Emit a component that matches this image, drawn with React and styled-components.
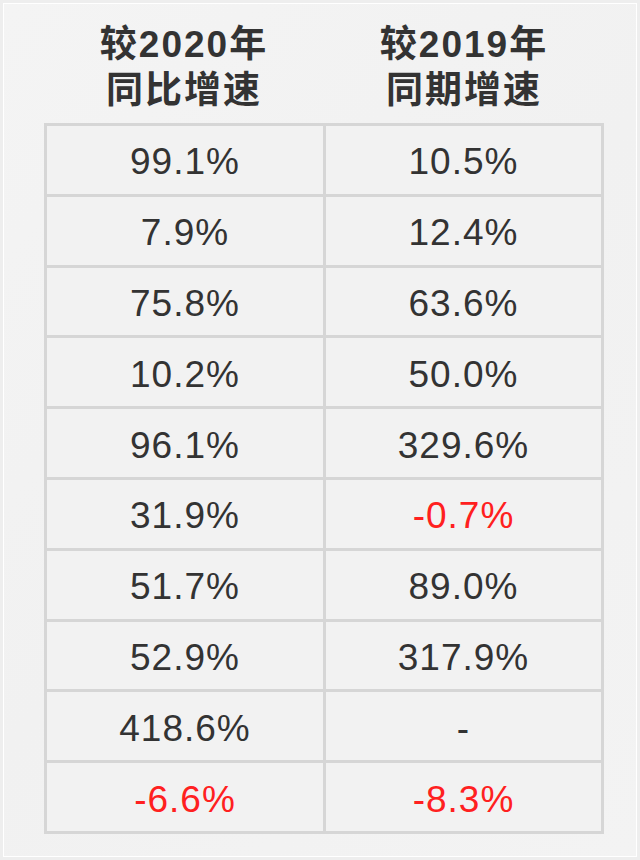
import React from "react";
import styled, { createGlobalStyle } from "styled-components";

const Global = createGlobalStyle`
  html, body { margin: 0; padding: 0; background: #f0f0f0; }
  #root { width: 640px; height: 860px; }
`;

const Frame = styled.div`
  box-sizing: border-box;
  width: 640px;
  height: 860px;
  padding: 3px;
  background: #eeeeee;
`;

const Panel = styled.div`
  box-sizing: border-box;
  height: 100%;
  border: 1px solid #ffffff;
  background: linear-gradient(135deg, #f4f4f4 0%, #f1f1f1 50%, #f3f3f3 100%);
  padding: 18px 0 0 40px;
`;

const Columns = styled.div`
  display: grid;
  grid-template-columns: 280px 280px;
  width: 560px;
`;

const HeadCell = styled.div`
  text-align: center;
  font-family: "Liberation Sans", "Noto Sans CJK SC", sans-serif;
  font-weight: bold;
  font-size: 37px;
  line-height: 46px;
  letter-spacing: 2px;
  color: #333333;
  padding-bottom: 9px;
`;

const Table = styled.div`
  display: grid;
  grid-template-columns: 276px 275px;
  grid-auto-rows: 67.8px;
  gap: 3px;
  padding: 3px;
  width: 560px;
  box-sizing: border-box;
  background: #d6d6d6;
`;

const Cell = styled.div`
  display: flex;
  align-items: center;
  justify-content: center;
  background: #f2f2f2;
  font-family: "Liberation Sans", Arial, sans-serif;
  font-size: 37px;
  letter-spacing: 1px;
  padding-top: 5px;
  box-sizing: border-box;
  color: ${(p) => (p.$neg ? "#ff2020" : "#333333")};
`;

const rows = [
  ["99.1%", "10.5%"],
  ["7.9%", "12.4%"],
  ["75.8%", "63.6%"],
  ["10.2%", "50.0%"],
  ["96.1%", "329.6%"],
  ["31.9%", "-0.7%"],
  ["51.7%", "89.0%"],
  ["52.9%", "317.9%"],
  ["418.6%", "-"],
  ["-6.6%", "-8.3%"],
];

export default function App() {
  return (
    <>
      <Global />
      <Frame>
        <Panel>
          <Columns>
            <HeadCell>较2020年<br />同比增速</HeadCell>
            <HeadCell>较2019年<br />同期增速</HeadCell>
          </Columns>
          <Table>
            {rows.map((r, i) =>
              r.map((v, j) => (
                <Cell key={`${i}-${j}`} $neg={v.startsWith("-") && v.length > 1}>
                  {v}
                </Cell>
              ))
            )}
          </Table>
        </Panel>
      </Frame>
    </>
  );
}
